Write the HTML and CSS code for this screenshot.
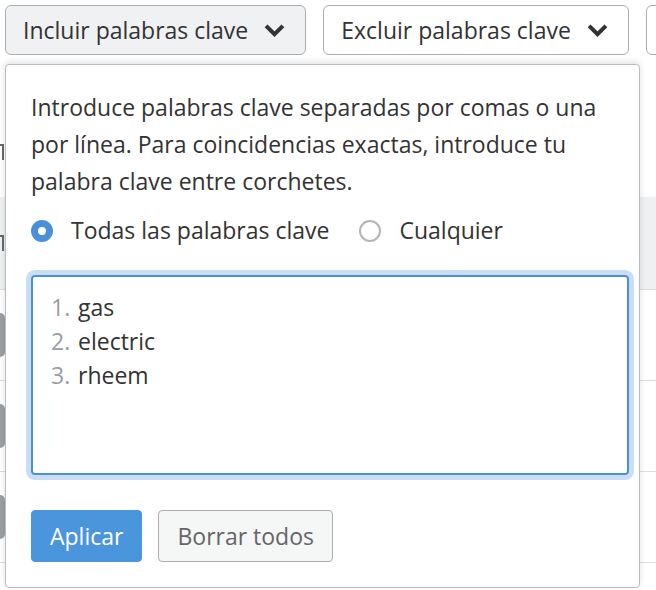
FILE: index.html
```html
<!DOCTYPE html>
<html lang="es">
<head>
  <meta charset="UTF-8">
  <title>Filtros de palabras clave</title>
  <link rel="stylesheet" href="styles.css">
</head>
<body>
  <div class="page">
    <!-- background rows peeking out on the left -->
    <div class="bg-rows">
      <div class="bg-row bg-row-plain"><span class="bg-tick"></span></div>
      <div class="bg-row bg-row-shaded"><span class="bg-tick"></span></div>
      <div class="bg-row"><span class="bg-dot"></span></div>
      <div class="bg-row"><span class="bg-dot"></span></div>
      <div class="bg-row"><span class="bg-dot"></span></div>
    </div>

    <div class="filters">
      <button class="filter-btn filter-btn-active">
        Incluir palabras clave
        <svg class="chevron" viewBox="0 0 20 13"><polyline points="2,2.5 10,10.5 18,2.5"/></svg>
      </button>
      <button class="filter-btn">
        Excluir palabras clave
        <svg class="chevron" viewBox="0 0 20 13"><polyline points="2,2.5 10,10.5 18,2.5"/></svg>
      </button>
      <button class="filter-btn filter-btn-more"></button>
    </div>

    <div class="dropdown">
      <p class="hint">Introduce palabras clave separadas por comas o una por línea. Para coincidencias exactas, introduce tu palabra clave entre corchetes.</p>

      <div class="radio-group">
        <label class="radio">
          <span class="radio-mark radio-mark-checked"></span>
          Todas las palabras clave
        </label>
        <label class="radio">
          <span class="radio-mark"></span>
          Cualquier
        </label>
      </div>

      <div class="keywords-box">
        <ol class="keywords">
          <li>gas</li>
          <li>electric</li>
          <li>rheem</li>
        </ol>
      </div>

      <div class="actions">
        <button class="btn btn-primary">Aplicar</button>
        <button class="btn btn-secondary">Borrar todos</button>
      </div>
    </div>
  </div>
</body>
</html>
```

FILE: styles.css
```css
/* ===== Base ===== */
* {
  margin: 0;
  padding: 0;
  box-sizing: border-box;
}

body {
  background: #ffffff;
  color: #333333;
  font-family: 'Open Sans', 'Noto Sans', sans-serif;
  overflow: hidden;
}

.page {
  position: relative;
  width: 656px;
  height: 590px;
  overflow: hidden;
}

/* ===== Background content ===== */
.bg-rows {
  padding-top: 107px;
}

.bg-row {
  height: 91px;
  border-bottom: 1px solid #dcdfe1;
  display: flex;
  align-items: center;
}

.bg-row-plain {
  height: 90px;
  border-bottom: none;
}

.bg-row-shaded {
  height: 93px;
  background: #eef0f1;
}

.bg-tick {
  width: 4px;
  height: 16px;
  border-top: 2px solid #666a6d;
  border-right: 2px solid #666a6d;
}

.bg-dot {
  width: 5px;
  height: 44px;
  border-radius: 0 22px 22px 0;
  background: #9a9fa3;
}

/* ===== Filter buttons ===== */
.filters {
  position: absolute;
  top: 5px;
  left: 5px;
  display: flex;
  gap: 17px;
}

.filter-btn {
  height: 50px;
  padding: 0 20px 0 17px;
  display: flex;
  align-items: center;
  gap: 16px;
  background: #ffffff;
  border: 1px solid #a9aeb1;
  border-radius: 6px;
  font-family: inherit;
  font-size: 23px;
  color: #333333;
  white-space: nowrap;
}

.filter-btn-active {
  background: #f0f1f2;
}

.filter-btn-more {
  width: 120px;
}

.chevron {
  width: 21px;
  height: 14px;
  fill: none;
  stroke: #333333;
  stroke-width: 3.8;
}

/* ===== Dropdown ===== */
.dropdown {
  position: absolute;
  top: 64px;
  left: 5px;
  width: 635px;
  height: 524px;
  padding: 24px 10px 25px 25px;
  background: #ffffff;
  border: 1px solid #b9bdc0;
  border-radius: 4px;
  box-shadow: 0 -2px 6px rgba(0, 0, 0, 0.12);
}

.hint {
  font-size: 23px;
  line-height: 37px;
}

.radio-group {
  display: flex;
  gap: 30px;
  margin-top: 12px;
  font-size: 23px;
  line-height: 37px;
}

.radio {
  display: flex;
  align-items: center;
  gap: 18px;
}

.radio-mark {
  width: 22px;
  height: 22px;
  border: 2px solid #b2b6b9;
  border-radius: 50%;
}

.radio-mark-checked {
  border: 7px solid #4a90d9;
}

/* ===== Keyword box ===== */
.keywords-box {
  margin-top: 26px;
  height: 200px;
  border: 2px solid #4a90d9;
  border-radius: 4px;
  box-shadow: 0 0 0 5px #c9ddf4;
  padding: 13px 18px;
}

.keywords {
  list-style: none;
  counter-reset: line;
  font-size: 23px;
  line-height: 34px;
}

.keywords li {
  counter-increment: line;
}

.keywords li::before {
  content: counter(line) ". ";
  color: #9a9ea1;
  display: inline-block;
  width: 27px;
}

/* ===== Actions ===== */
.actions {
  display: flex;
  gap: 16px;
  margin-top: 35px;
}

.btn {
  height: 52px;
  padding: 0 18px;
  border-radius: 4px;
  font-family: inherit;
  font-size: 23px;
}

.btn-primary {
  background: #4a95dc;
  border: 1px solid #4a95dc;
  color: #ffffff;
}

.btn-secondary {
  background: #f5f6f6;
  border: 1px solid #a9aeb1;
  color: #666666;
}
```
